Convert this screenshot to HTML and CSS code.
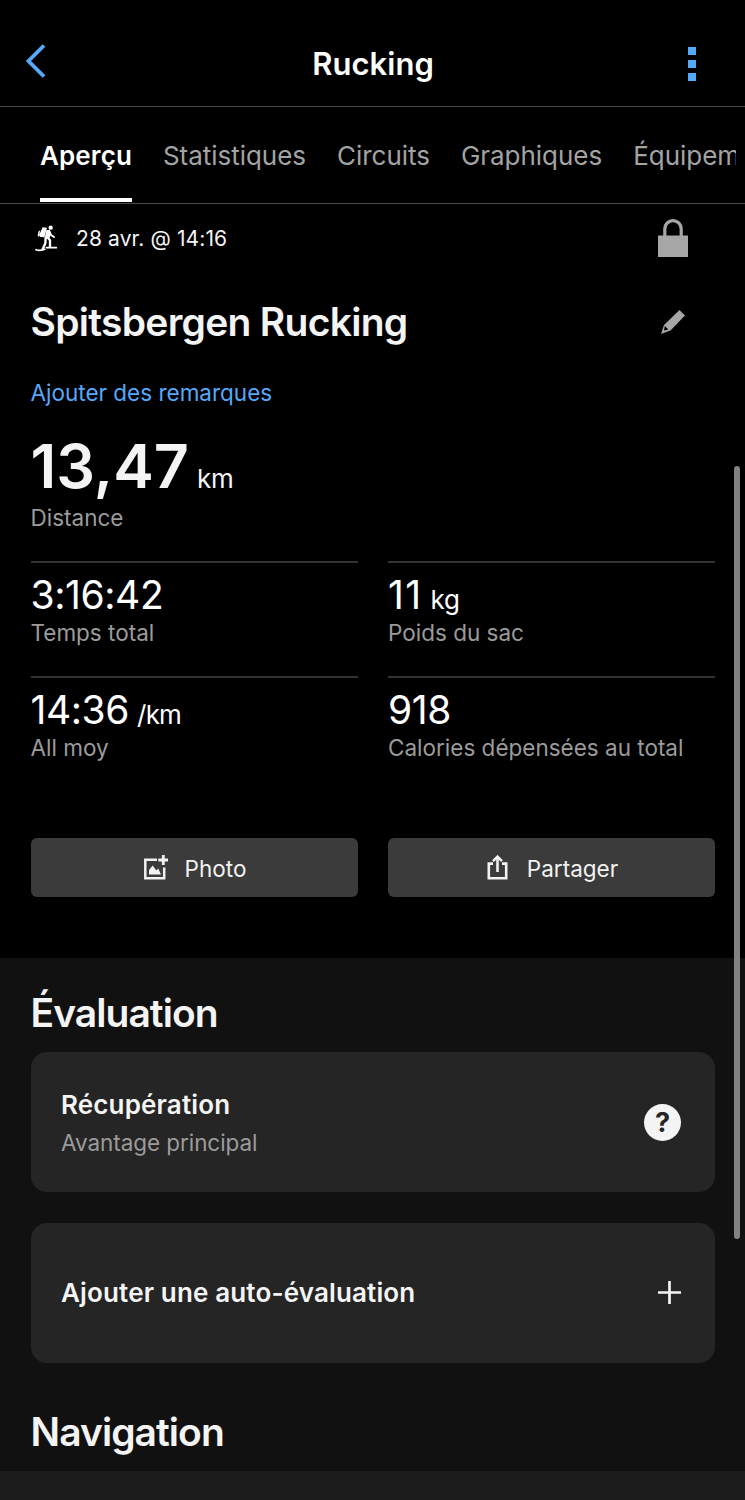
FILE: index.html
```
<!DOCTYPE html>
<html lang="fr">

<head>
    <meta charset="UTF-8">
    <meta name="viewport" content="width=device-width, initial-scale=1.0">
    <title>Rucking</title>
    <link rel="stylesheet" href="styles.css">
</head>

<body>
    <header class="topbar">
        <a href="#" class="back" aria-label="Retour">
            <svg width="20" height="34" viewBox="0 0 20 34"><path d="M18 1.5 L2.5 17 L18 32.5" fill="none" stroke="#55a9fa" stroke-width="3.8"/></svg>
        </a>
        <h1>Rucking</h1>
        <a href="#" class="more" aria-label="Menu">
            <svg width="8" height="34" viewBox="0 0 8 34" fill="#55a9fa"><rect width="8" height="8"/><rect y="13" width="8" height="8"/><rect y="26" width="8" height="8"/></svg>
        </a>
    </header>

    <nav class="tabs">
        <ul>
            <li class="active"><a href="#">Aperçu</a></li>
            <li><a href="#">Statistiques</a></li>
            <li><a href="#">Circuits</a></li>
            <li><a href="#">Graphiques</a></li>
            <li><a href="#">Équipement</a></li>
        </ul>
    </nav>

    <main>
        <div class="meta">
            <svg class="hiker" width="24" height="28" viewBox="40 40 72 84">
                <circle cx="90" cy="51" r="6.5" fill="#fff"/>
                <path d="M66 50 L79 51 L71 80 L59 79 L55 74 Z M53 63 L59 58 L54 78 L51 76 Z" fill="#fff"/>
                <path d="M77 59 L87 57 L90 68 L87 82 L76 85 L72 81 Z" fill="#fff"/>
                <g fill="none" stroke="#fff" stroke-linejoin="round" stroke-linecap="round">
                    <path d="M86 62 L91 73 L100 79" stroke-width="6"/>
                    <path d="M80 80 L88 89 L88 109" stroke-width="7"/>
                    <path d="M75 81 L74 98 L66 116" stroke-width="7"/>
                    <path d="M46 117 Q58 122 72 116 M77 111 H107" stroke-width="5"/>
                </g>
            </svg>
            <span class="date">28 avr. @ 14:16</span>
            <svg class="lock" width="30" height="38" viewBox="0 0 30 38">
                <rect y="16.5" width="30" height="21.5" fill="#a6a6a6"/>
                <path d="M6.8 18 V9.8 a8.2 8.2 0 0 1 16.4 0 V18" fill="none" stroke="#a6a6a6" stroke-width="3.2"/>
            </svg>
        </div>

        <div class="title-row">
            <h2>Spitsbergen Rucking</h2>
            <svg width="24" height="24" viewBox="0 0 24 24">
                <path d="M18.5 0 L24 5.5 L9.5 20.5 L0 24 L3 15 Z" fill="#a6a6a6"/>
                <path d="M3.8 16 L7.4 19.4 L3 20.6 Z" fill="#000"/>
            </svg>
        </div>

        <a href="#" class="notes">Ajouter des remarques</a>

        <div class="distance">
            <p class="big">13,47<span class="unit">km</span></p>
            <p class="label">Distance</p>
        </div>

        <div class="stats">
            <div class="stat">
                <p class="value">3:16:42</p>
                <p class="label">Temps total</p>
            </div>
            <div class="stat">
                <p class="value loose">11<span class="unit">kg</span></p>
                <p class="label">Poids du sac</p>
            </div>
            <div class="stat">
                <p class="value">14:36<span class="unit pace">/km</span></p>
                <p class="label">All moy</p>
            </div>
            <div class="stat">
                <p class="value">918</p>
                <p class="label">Calories dépensées au total</p>
            </div>
        </div>

        <div class="actions">
            <button>
                <svg width="24" height="25" viewBox="0 0 24 25">
                    <path d="M13 4.8 H1.3 V23.2 H20.2 V12.5" fill="none" stroke="#f2f2f2" stroke-width="2.5"/>
                    <path d="M19.3 0 V10 M14.3 5 H24" stroke="#f2f2f2" stroke-width="2.8"/>
                    <path d="M5 19.5 V15 L8.7 10.5 L12.3 15.5 L14.3 13.5 L17 19.5 Z" fill="#f2f2f2"/>
                </svg>
                Photo
            </button>
            <button>
                <svg width="24" height="25" viewBox="0 0 24 25">
                    <path d="M7 8.6 H2.8 V23.2 H20.2 V8.6 H16" fill="none" stroke="#f2f2f2" stroke-width="2.6"/>
                    <path d="M11.5 17 V2.5" stroke="#f2f2f2" stroke-width="2.6"/>
                    <path d="M7 6.2 L11.5 1.7 L16 6.2" fill="none" stroke="#f2f2f2" stroke-width="2.6"/>
                </svg>
                Partager
            </button>
        </div>
    </main>

    <section class="evaluation">
        <h2>Évaluation</h2>
        <div class="card">
            <div class="card-text">
                <h3>Récupération</h3>
                <p class="label">Avantage principal</p>
            </div>
            <span class="help">?</span>
        </div>
        <div class="card">
            <h3>Ajouter une auto-évaluation</h3>
            <svg width="23" height="23" viewBox="0 0 23 23"><path d="M11.5 0 V23 M0 11.5 H23" stroke="#f4f4f4" stroke-width="2.7"/></svg>
        </div>
        <h2 class="nav-title">Navigation</h2>
    </section>
    <section class="map"></section>

    <div class="scrollbar"></div>
</body>

</html>
```
FILE: styles.css
```
* {
    margin: 0;
    padding: 0;
    box-sizing: border-box;
}

body {
    position: relative;
    height: 1500px;
    overflow: hidden;
    display: flex;
    flex-direction: column;
    font-family: Inter, "Liberation Sans", sans-serif;
    color: #f4f4f4;
    background-color: #000;
}

a {
    text-decoration: none;
    color: inherit;
}

svg {
    display: block;
    flex-shrink: 0;
}

/* Top bar */
.topbar {
    display: grid;
    grid-template-columns: 1fr auto 1fr;
    align-items: center;
    height: 107px;
    padding: 22px 49px 0 26px;
    border-bottom: 1px solid #4a4a4a;
}

.topbar h1 {
    margin-left: 24px;
    font-size: 31px;
    font-weight: 600;
    line-height: 40px;
    letter-spacing: 0.05px;
    color: #fff;
}

.back {
    padding-bottom: 6px;
}

.more {
    justify-self: end;
}

/* Tabs */
.tabs {
    height: 97px;
    border-bottom: 1px solid #4a4a4a;
}

.tabs ul {
    display: flex;
    gap: 31px;
    height: 96px;
    margin-right: 9px;
    padding-left: 40px;
    overflow: hidden;
    list-style: none;
}

.tabs li {
    position: relative;
    font-size: 26px;
    line-height: 97px;
    letter-spacing: -0.03px;
    color: #a3a3a3;
}

.tabs .active {
    font-weight: 600;
    letter-spacing: 0.1px;
    color: #fff;
}

.tabs .active::after {
    content: "";
    position: absolute;
    left: 0;
    right: 0;
    bottom: 1px;
    height: 4px;
    background-color: #fff;
}

/* Activity summary */
main {
    height: 754px;
    padding: 0 30.5px;
}

.meta {
    display: flex;
    align-items: center;
    height: 68px;
    padding: 0 26.5px 0 3px;
}

.date {
    flex: 1;
    margin-left: 18.5px;
    font-size: 21px;
    letter-spacing: 0.12px;
}

.title-row {
    display: flex;
    align-items: center;
    justify-content: space-between;
    height: 99px;
    padding-right: 29.5px;
}

h2 {
    font-size: 39px;
    font-weight: 600;
    line-height: 49px;
    letter-spacing: -0.72px;
}

.notes {
    display: block;
    font-size: 22.5px;
    line-height: 43px;
    color: #55a9fa;
}

.label {
    font-size: 22.5px;
    line-height: 29px;
    color: #9b9b9b;
}

.unit {
    margin-left: 8px;
    font-size: 26px;
    font-weight: 400;
    line-height: 1;
    letter-spacing: -0.3px;
}

.pace {
    letter-spacing: -0.8px;
}

.distance {
    margin-top: 15px;
}

.big {
    font-size: 61px;
    font-weight: 600;
    line-height: 74px;
}

.stats {
    display: grid;
    grid-template-columns: 1fr 1fr;
    column-gap: 30px;
    margin-top: 29px;
}

.stat {
    height: 115px;
    padding-top: 9px;
    border-top: 2px solid #333;
}

.stat:nth-child(even) {
    padding-left: 0.5px;
}

.value {
    font-size: 39px;
    line-height: 46px;
    letter-spacing: -0.4px;
    color: #fff;
}

.loose {
    letter-spacing: 1.4px;
}

.actions {
    display: grid;
    grid-template-columns: 1fr 1fr;
    column-gap: 30px;
    margin-top: 47px;
}

.actions button {
    display: flex;
    align-items: center;
    justify-content: center;
    gap: 17px;
    height: 59px;
    padding: 1px 0 0 2px;
    border: none;
    border-radius: 6px;
    font: inherit;
    font-size: 22.5px;
    color: #f2f2f2;
    background-color: #3b3b3b;
}

.actions svg {
    margin-top: -2px;
}

/* Evaluation */
.evaluation {
    height: 513px;
    padding: 30px 30.5px 0;
    background-color: #111;
}

.evaluation h2 {
    letter-spacing: -0.95px;
}

.card {
    display: flex;
    align-items: center;
    justify-content: space-between;
    height: 140px;
    margin-top: 30.5px;
    padding: 0 33.5px 0 30.5px;
    border-radius: 16px;
    background-color: #252525;
}

h2 + .card {
    margin-top: 15px;
}

.card h3 {
    font-size: 26px;
    font-weight: 600;
    line-height: 38px;
    letter-spacing: 0.15px;
}

.card .label {
    line-height: 37px;
    letter-spacing: -0.06px;
}

.card-text {
    padding-top: 3px;
}

.help {
    width: 37px;
    height: 37px;
    border-radius: 50%;
    font-size: 27px;
    font-weight: 700;
    line-height: 37px;
    text-align: center;
    color: #252525;
    background-color: #f4f4f4;
}

.evaluation .nav-title {
    margin-top: 44px;
}

.map {
    flex: 1;
    background-color: #1c1c1c;
}

.scrollbar {
    position: absolute;
    top: 466px;
    right: 5px;
    width: 6px;
    height: 773px;
    border-radius: 3px;
    background-color: #828282;
}
```
